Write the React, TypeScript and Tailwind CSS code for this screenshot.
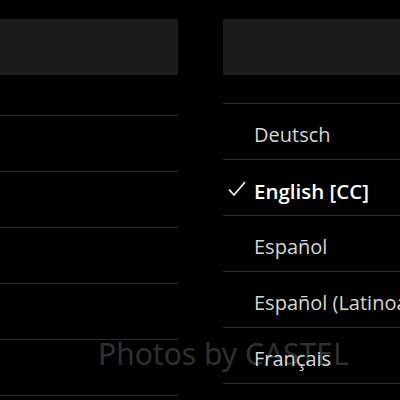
const languages = ["Deutsch", "English [CC]", "Español", "Español (Latinoamérica)", "Français"];
const selected = "English [CC]";

export default function App() {
  return (
    <div
      className="relative w-[400px] h-[400px] overflow-hidden bg-black flex gap-[45px] pt-[19px]"
      style={{ fontFamily: '"Open Sans", "Noto Sans", sans-serif' }}
    >
      <div className="w-[178px] shrink-0">
        <div className="h-[56px] bg-[#1b1b1b]" />
        <div className="h-[41px] border-b border-[#2a2a2a]" />
        {[0, 1, 2, 3, 4].map((i) => (
          <div key={i} className="h-[56px] border-b border-[#2a2a2a]" />
        ))}
      </div>

      <div className="w-[320px] shrink-0">
        <div className="h-[56px] bg-[#1b1b1b]" />
        <div className="h-[29px] border-b border-[#2a2a2a]" />
        {languages.map((lang) => {
          const on = lang === selected;
          return (
            <div
              key={lang}
              className="relative h-[56px] border-b border-[#2a2a2a] flex items-center pt-[7px] pl-[31px] whitespace-nowrap"
            >
              {on && (
                <svg
                  className="absolute left-[5px] top-[21px]"
                  width="18"
                  height="16"
                  viewBox="0 0 18 16"
                  fill="none"
                  stroke="#f2f2f2"
                  strokeWidth="1.8"
                >
                  <path d="M1 8.5 L6 14 L17 1" />
                </svg>
              )}
              <span
                className={
                  on
                    ? "text-[20.5px] font-semibold text-white"
                    : "text-[20px] text-[#d6d6d6]"
                }
              >
                {lang}
              </span>
            </div>
          );
        })}
      </div>

      <div
        className="absolute left-[98px] top-[331px] text-[30px] text-white/20 whitespace-nowrap"
        style={{ fontFamily: '"Noto Sans", sans-serif' }}
      >
        Photos by CASTEL
      </div>
    </div>
  );
}
